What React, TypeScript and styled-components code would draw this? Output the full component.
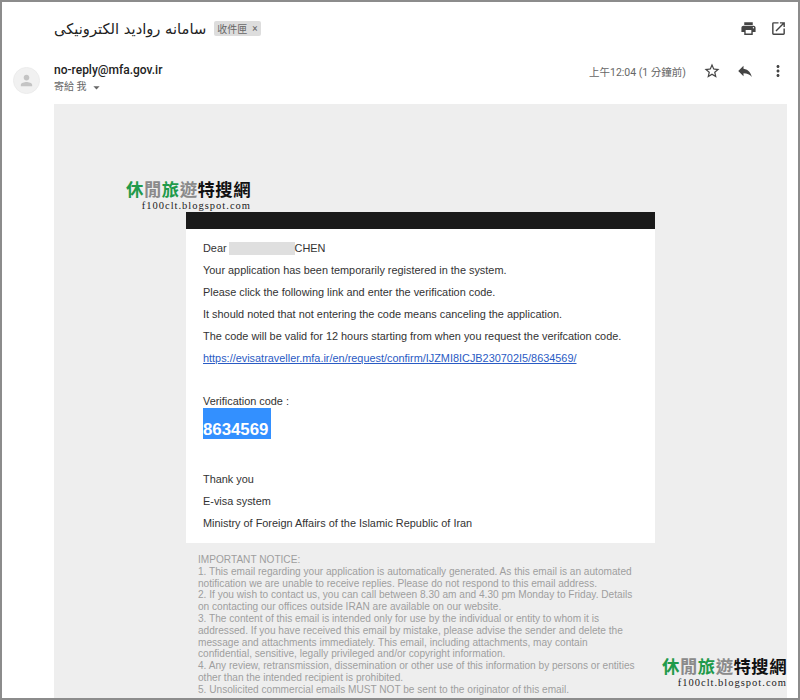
import styled, { createGlobalStyle } from "styled-components";
import {
  MdArrowDropDown,
  MdMoreVert,
  MdOpenInNew,
  MdPerson,
  MdPrint,
  MdReply,
  MdStarBorder,
} from "react-icons/md";

const GlobalStyle = createGlobalStyle`
  html, body {
    margin: 0;
    padding: 0;
    background: #fff;
  }
`;

const UI_FONT = `Roboto, "Noto Sans CJK TC", sans-serif`;
const MAIL_FONT = `"Liberation Sans", Arial, sans-serif`;

const Frame = styled.div`
  box-sizing: border-box;
  position: relative;
  width: 800px;
  height: 700px;
  border: 2px solid #8c8c8c;
  overflow: hidden;
  background: #fff;
  display: flex;
  flex-direction: column;
  font-family: ${UI_FONT};
`;

/* subject line */
const SubjectRow = styled.div`
  flex-shrink: 0;
  display: flex;
  align-items: center;
  height: 52px;
  padding: 0 11px 0 52px;
`;

const Subject = styled.h1`
  margin: 0;
  font-family: "DejaVu Sans", sans-serif;
  font-size: 14.7px;
  font-weight: 400;
  color: #222;
`;

const InboxTag = styled.span`
  display: inline-flex;
  align-items: center;
  gap: 5px;
  height: 15px;
  margin-left: 8px;
  padding: 0 3px 0 3px;
  border-radius: 2px;
  background: #dddddd;
  color: #666;
  font-size: 10px;
`;

const Spacer = styled.div`
  flex: 1;
`;

const TopActions = styled.div`
  display: flex;
  align-items: center;
  gap: 13px;
  color: #444;
`;

/* sender line */
const SenderRow = styled.div`
  flex-shrink: 0;
  display: flex;
  height: 50px;
  padding: 0 11px 0 11px;
`;

const Avatar = styled.div`
  display: flex;
  align-items: center;
  justify-content: center;
  width: 27px;
  height: 27px;
  margin: 13px 14px 0 0;
  border-radius: 50%;
  background: #f1f1f1;
  border: 1px solid #ececec;
  box-sizing: border-box;
  color: #c4c4c4;
`;

const SenderInfo = styled.div`
  padding-top: 8px;
`;

const SenderName = styled.div`
  font-size: 12px;
  line-height: 16px;
  font-weight: 500;
  color: #222;
`;

const Recipient = styled.div`
  display: flex;
  align-items: center;
  font-size: 10px;
  line-height: 16px;
  color: #666;
  margin-top: 1px;
  gap: 3px;
`;

const TimeStamp = styled.div`
  font-size: 10.5px;
  color: #666;
  margin-top: 10px;
  margin-right: 17px;
`;

const MessageActions = styled.div`
  display: flex;
  align-items: flex-start;
  gap: 15px;
  margin-top: 8px;
  color: #444;
`;

const IconSlot = styled.span`
  display: flex;
`;

/* grey mail body */
const Panel = styled.div`
  flex: 1;
  min-height: 0;
  margin: 0 11px 0 52px;
  padding-top: 76px;
  background: #eeeeee;
  font-family: ${MAIL_FONT};
`;

const PanelInner = styled.div`
  width: 469px;
  margin-left: 132px;
`;

const LogoWrap = styled.div`
  width: 125px;
  margin: 0 0 0 -60px;
  text-align: right;
`;

const LogoTitle = styled.div`
  display: flex;
  justify-content: flex-end;
  font-family: "Liberation Serif", "Noto Sans CJK TC", sans-serif;
  font-size: 17.4px;
  line-height: 20px;
  letter-spacing: 0.45px;
  font-weight: 700;
  white-space: nowrap;
`;

const LogoChar = styled.span<{ $tone: "green" | "grey" | "black" }>`
  display: block;
  height: 20px;
  color: ${(p) =>
    p.$tone === "green" ? "#1f9a4a" : p.$tone === "grey" ? "#8a8a8a" : "#111"};
`;

const LogoUrl = styled.div`
  font-family: "Liberation Serif", serif;
  font-size: 10.5px;
  line-height: 12px;
  letter-spacing: 1px;
  color: #222;
  white-space: nowrap;
`;

const Card = styled.div`
  background: #fff;
`;

const CardBar = styled.div`
  height: 17px;
  background: #1a1a1a;
`;

const CardBody = styled.div`
  padding: 8px 17px 9px 17px;
  font-size: 10.9px;
  color: #333;
`;

const Line = styled.div`
  height: 22px;
  line-height: 22px;
  white-space: nowrap;
  display: flex;
  align-items: center;
`;

const Redacted = styled.span`
  display: inline-block;
  width: 66px;
  height: 13px;
  margin-left: 2px;
  background: #dfdfdf;
`;

const MailLink = styled.a`
  color: #2a5bc4;
  text-decoration: underline;
`;

const Gap = styled.div<{ $h: number }>`
  height: ${(p) => p.$h}px;
`;

const CodeLabel = styled.div`
  line-height: 14px;
`;

const Code = styled.div`
  width: 68px;
  height: 31px;
  background: #3390ff;
  color: #fff;
  font-size: 16.8px;
  font-weight: 700;
  line-height: 43px;
  overflow: hidden;
`;

const Notice = styled.div`
  padding: 11px 0 0 12px;
  width: 445px;
  font-size: 10.12px;
  line-height: 11.8px;
  color: #9e9e9e;
`;

/* site watermark over the corner */
const Watermark = styled.div`
  position: absolute;
  right: 11px;
  bottom: 9px;
  text-align: right;
`;

const logoChars: { c: string; tone: "green" | "grey" | "black" }[] = [
  { c: "休", tone: "green" },
  { c: "閒", tone: "grey" },
  { c: "旅", tone: "green" },
  { c: "遊", tone: "grey" },
  { c: "特", tone: "black" },
  { c: "搜", tone: "black" },
  { c: "網", tone: "black" },
];

const notices = [
  "IMPORTANT NOTICE:",
  "1. This email regarding your application is automatically generated. As this email is an automated notification we are unable to receive replies. Please do not respond to this email address.",
  "2. If you wish to contact us, you can call between 8.30 am and 4.30 pm Monday to Friday. Details on contacting our offices outside IRAN are available on our website.",
  "3. The content of this email is intended only for use by the individual or entity to whom it is addressed. If you have received this email by mistake, please advise the sender and delete the message and attachments immediately. This email, including attachments, may contain confidential, sensitive, legally privileged and/or copyright information.",
  "4. Any review, retransmission, dissemination or other use of this information by persons or entities other than the intended recipient is prohibited.",
  "5. Unsolicited commercial emails MUST NOT be sent to the originator of this email.",
];

const Logo = () => (
  <>
    <LogoTitle>
      {logoChars.map((item) => (
        <LogoChar key={item.c} $tone={item.tone}>
          {item.c}
        </LogoChar>
      ))}
    </LogoTitle>
    <LogoUrl>f100clt.blogspot.com</LogoUrl>
  </>
);

const App = () => {
  return (
    <Frame>
      <GlobalStyle />
      <SubjectRow>
        <Subject dir="rtl">سامانه رواديد الکترونیکی</Subject>
        <InboxTag>
          收件匣 <span>×</span>
        </InboxTag>
        <Spacer />
        <TopActions>
          <MdPrint size={17} />
          <MdOpenInNew size={17} />
        </TopActions>
      </SubjectRow>

      <SenderRow>
        <Avatar>
          <MdPerson size={17} />
        </Avatar>
        <SenderInfo>
          <SenderName>no-reply@mfa.gov.ir</SenderName>
          <Recipient>
            寄給 我 <MdArrowDropDown size={15} />
          </Recipient>
        </SenderInfo>
        <Spacer />
        <TimeStamp>上午12:04 (1 分鐘前)</TimeStamp>
        <MessageActions>
          <IconSlot>
            <MdStarBorder size={18} />
          </IconSlot>
          <IconSlot>
            <MdReply size={18} />
          </IconSlot>
          <IconSlot>
            <MdMoreVert size={18} />
          </IconSlot>
        </MessageActions>
      </SenderRow>

      <Panel>
        <PanelInner>
          <LogoWrap>
            <Logo />
          </LogoWrap>
          <Card>
            <CardBar />
            <CardBody>
              <Line>
                Dear
                <Redacted />
                CHEN
              </Line>
              <Line>Your application has been temporarily registered in the system.</Line>
              <Line>Please click the following link and enter the verification code.</Line>
              <Line>It should noted that not entering the code means canceling the application.</Line>
              <Line>The code will be valid for 12 hours starting from when you request the verifcation code.</Line>
              <Line>
                <MailLink href="#">
                  https://evisatraveller.mfa.ir/en/request/confirm/IJZMI8ICJB230702I5/8634569/
                </MailLink>
              </Line>
              <Gap $h={25} />
              <CodeLabel>Verification code :</CodeLabel>
              <Code>8634569</Code>
              <Gap $h={29} />
              <Line>Thank you</Line>
              <Line>E-visa system</Line>
              <Line>Ministry of Foreign Affairs of the Islamic Republic of Iran</Line>
            </CardBody>
          </Card>
          <Notice>
            {notices.map((text) => (
              <div key={text}>{text}</div>
            ))}
          </Notice>
        </PanelInner>
      </Panel>

      <Watermark>
        <Logo />
      </Watermark>
    </Frame>
  );
};

export default App;
